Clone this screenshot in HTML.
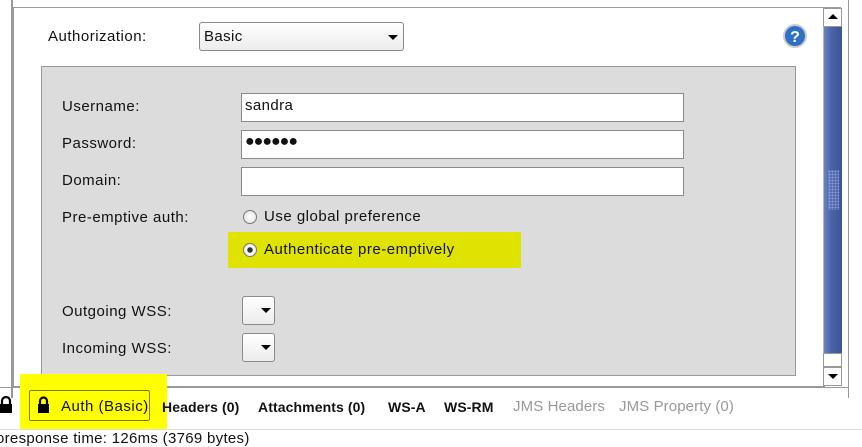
<!DOCTYPE html>
<html><head><style>
body{margin:0;width:862px;height:447px;background:#fff;position:relative;overflow:hidden;font-family:"Liberation Sans",sans-serif;font-size:15px;color:#111}
.a{position:absolute}
.lbl{position:absolute;font-size:15px;letter-spacing:0.5px}
.inp{position:absolute;background:#fff;border:1px solid #8a8a8a;box-sizing:border-box;font-size:15px;letter-spacing:0.4px;padding:3px 3px 0 3px}
.dd{position:absolute;background:linear-gradient(#fff,#ececec);border:1px solid #8a8a8a;border-radius:3px;box-sizing:border-box}
.tri{position:absolute;width:0;height:0;border-left:5px solid transparent;border-right:5px solid transparent;border-top:5px solid #000}
.radio{position:absolute;width:14px;height:14px;border-radius:50%;border:1px solid #777;background:radial-gradient(#fff,#ddd);box-sizing:border-box}
.tab{position:absolute;top:399px;font-size:14px;font-weight:bold;letter-spacing:0.1px}
</style></head><body>
<div class="a" style="left:11px;top:0;width:2px;height:398px;background:#999"></div>
<div class="a" style="left:13px;top:0;width:828px;height:7px;border-bottom:1px solid #999;background:#fff"></div>
<div class="a" style="left:13px;top:8px;width:810px;height:378px;border:1px solid #999;border-top:none;background:#fff"></div>
<div class="a" style="left:848px;top:0;width:1px;height:398px;background:#999"></div>
<div class="a" style="left:823px;top:8px;width:19px;height:19px;background:#fff;border:1px solid #999;box-sizing:border-box"></div>
<div class="tri" style="left:828px;top:14px;border-top:none;border-bottom:5px solid #000"></div>
<div class="a" style="left:823px;top:27px;width:19px;height:326px;background:linear-gradient(90deg,#6a82c0,#4a64a8 40%,#3c5597);border-left:1px solid #a9b8e0;box-sizing:border-box"></div>
<div class="a" style="left:828px;top:170px;width:11px;height:40px;background-image:radial-gradient(#8ea2d8 1px,transparent 1.2px);background-size:3px 3px"></div>
<div class="a" style="left:823px;top:353px;width:19px;height:14px;background:#fff;border:1px solid #999;box-sizing:border-box"></div>
<div class="a" style="left:823px;top:367px;width:19px;height:19px;background:#fff;border:1px solid #999;box-sizing:border-box"></div>
<div class="tri" style="left:828px;top:374px"></div>
<div class="lbl" style="left:48px;top:28px">Authorization:</div>
<div class="dd" style="left:199px;top:22px;width:205px;height:29px"><span class="a" style="left:4px;top:5px;letter-spacing:0.4px">Basic</span><div class="tri" style="left:188px;top:12px"></div></div>
<svg class="a" style="left:782px;top:23px" width="26" height="26"><circle cx="13" cy="13" r="12" fill="#ccc"/><circle cx="13" cy="13" r="10" fill="#2f6fc6"/><text x="13" y="19" text-anchor="middle" fill="#fff" font-weight="bold" font-size="16" font-family="Liberation Sans">?</text></svg>
<div class="a" style="left:41px;top:66px;width:755px;height:310px;background:#dcdcdc;border:1px solid #999;box-sizing:border-box"></div>
<div class="lbl" style="left:62px;top:98px">Username:</div>
<div class="inp" style="left:241px;top:93px;width:443px;height:29px">sandra</div>
<div class="lbl" style="left:62px;top:135px">Password:</div>
<div class="inp" style="left:241px;top:130px;width:443px;height:29px;font-size:16px;letter-spacing:-1px;padding-top:2px">●●●●●●</div>
<div class="lbl" style="left:62px;top:172px">Domain:</div>
<div class="inp" style="left:241px;top:167px;width:443px;height:29px"></div>
<div class="lbl" style="left:62px;top:209px">Pre-emptive auth:</div>
<div class="radio" style="left:243px;top:210px"></div>
<div class="lbl" style="left:264px;top:208px">Use global preference</div>
<div class="a" style="left:228px;top:232px;width:293px;height:36px;background:#e0e300"></div>
<div class="radio" style="left:243px;top:243px;background:radial-gradient(#333 0 2.5px,#fff 3px,#ddd)"></div>
<div class="lbl" style="left:264px;top:241px">Authenticate pre-emptively</div>
<div class="lbl" style="left:62px;top:303px">Outgoing WSS:</div>
<div class="dd" style="left:242px;top:296px;width:33px;height:29px"><div class="tri" style="left:18px;top:11px"></div></div>
<div class="lbl" style="left:62px;top:340px">Incoming WSS:</div>
<div class="dd" style="left:242px;top:333px;width:33px;height:29px"><div class="tri" style="left:18px;top:11px"></div></div>
<div class="a" style="left:0;top:387px;width:849px;height:1px;background:#999"></div>
<div class="a" style="left:20px;top:374px;width:147px;height:56px;background:#ffff00"></div>
<div class="a" style="left:29px;top:390px;width:121px;height:31px;border:1px solid #7a7a00;border-radius:2px;box-sizing:border-box"></div>
<svg class="a" style="left:0;top:396px" width="12" height="18"><path d="M2 8V5a4 4 0 0 1 8 0v3" stroke="#000" stroke-width="2.2" fill="none"/><rect x="0" y="8" width="12" height="9" fill="#000"/></svg>
<svg class="a" style="left:37px;top:396px" width="13" height="18"><path d="M3 8V5a3.5 3.5 0 0 1 7 0v3" stroke="#000" stroke-width="2.2" fill="none"/><rect x="1" y="8" width="11" height="9" fill="#000"/></svg>
<div class="tab" style="left:61px;font-weight:normal;letter-spacing:0.5px;font-size:15px;top:398px">Auth (Basic)</div>
<div class="tab" style="left:162px">Headers (0)</div>
<div class="tab" style="left:258px">Attachments (0)</div>
<div class="tab" style="left:388px">WS-A</div>
<div class="tab" style="left:444px">WS-RM</div>
<div class="tab" style="left:513px;color:#999;font-weight:normal;font-size:15px;top:398px">JMS Headers</div>
<div class="tab" style="left:619px;color:#999;font-weight:normal;font-size:15px;top:398px">JMS Property (0)</div>
<div class="a" style="left:0;top:429px;width:862px;height:1px;background:#ddd"></div>
<div class="lbl" style="left:-4px;top:430px;letter-spacing:0.3px">oresponse time: 126ms (3769 bytes)</div>
</body></html>
